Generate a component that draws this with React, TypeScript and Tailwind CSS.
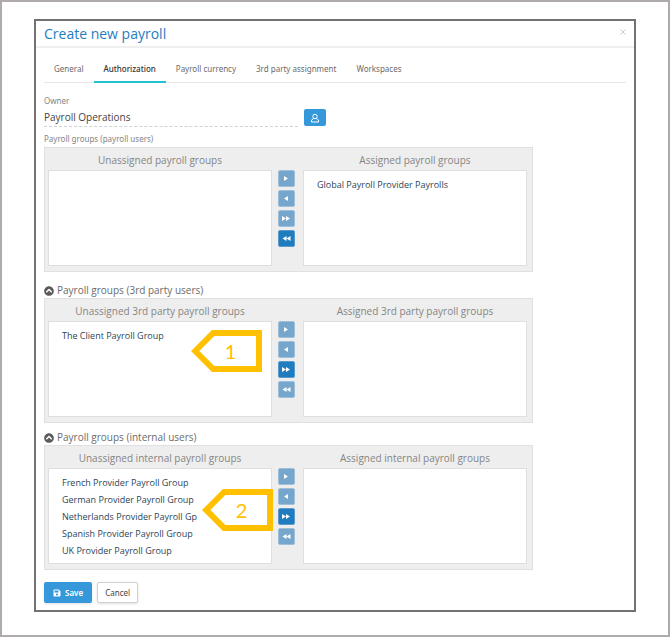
import type { ReactNode } from "react";
import { FaChevronCircleUp, FaSave } from "react-icons/fa";

const tabs = ["General", "Authorization", "Payroll currency", "3rd party assignment", "Workspaces"];

type Move = "right" | "left" | "allRight" | "allLeft";

const moves: { id: Move; label: string; path: string }[] = [
  { id: "right", label: "Assign selected", path: "M2 1v5L6 3.5z" },
  { id: "left", label: "Unassign selected", path: "M6 1v5L2 3.5z" },
  { id: "allRight", label: "Assign all", path: "M0 1v5L4 3.5zM4 1v5L8 3.5z" },
  { id: "allLeft", label: "Unassign all", path: "M4.5 1v5L0.5 3.5zM8.5 1v5L4.5 3.5z" },
];

function ListBox({ id, title, items }: { id: string; title: string; items: string[] }) {
  return (
    <div className="flex min-w-0 flex-1 flex-col">
      <label htmlFor={id} className="block pb-[2px] text-center text-[10px] leading-4 text-[#858585]">
        {title}
      </label>
      <select
        id={id}
        multiple
        className="h-[96px] w-full appearance-none overflow-hidden border border-[#dfdfdf] bg-white pt-[7px] pl-[13px] text-[9px] leading-[17px] text-[#2c4557] outline-none"
      >
        {items.map((item) => (
          <option key={item} className="min-h-[17px] p-0 leading-[17px]">
            {item}
          </option>
        ))}
      </select>
    </div>
  );
}

function PickList({
  id,
  kind,
  unassigned = [],
  assigned = [],
  active,
  children,
}: {
  id: string;
  kind: string;
  unassigned?: string[];
  assigned?: string[];
  active: Move;
  children?: ReactNode;
}) {
  return (
    <div className="relative flex w-full max-w-[489px] gap-[6px] border border-[#e0e0e0] bg-[#eeeeee] pt-1 pr-[5px] pb-[5px] pl-[3px]">
      <ListBox id={`${id}-unassigned`} title={`Unassigned ${kind}`} items={unassigned} />
      <div className="flex flex-col gap-[3px] pt-[18px] pr-[2px]">
        {moves.map((m) => (
          <button
            key={m.id}
            type="button"
            aria-label={m.label}
            disabled={m.id !== active}
            className={`flex size-[17px] items-center justify-center rounded-[2px] border ${
              m.id === active ? "border-[#5a9bcb] bg-[#1f7dbf]" : "border-[#9dbfd9] bg-[#76a6cb]"
            }`}
          >
            <svg viewBox="0 0 9 8" className="h-2 w-[9px] fill-white" aria-hidden="true">
              <path d={m.path} />
            </svg>
          </button>
        ))}
      </div>
      <ListBox id={`${id}-assigned`} title={`Assigned ${kind}`} items={assigned} />
      {children}
    </div>
  );
}

// numbered arrow pointing left
function Callout({ n, className }: { n: number; className: string }) {
  return (
    <div className={`pointer-events-none absolute h-[42px] w-[71px] ${className}`}>
      <svg viewBox="0 0 71 42" className="block size-full" aria-hidden="true">
        <path d="M4.2 21L22.2 3H68V39H22.2Z" fill="#fff" stroke="#ffc000" strokeWidth="6" />
      </svg>
      <span className="absolute inset-0 flex items-center justify-center pl-2 font-[Lato,sans-serif] text-[20px] text-[#ffc000]">
        {n}
      </span>
    </div>
  );
}

function SectionTitle({ children }: { children: string }) {
  return (
    <h2 className="flex items-center gap-[3px] text-[10px] leading-[15px] text-[#6b6b6b]">
      <FaChevronCircleUp className="size-[10px] text-[#5c5c5c]" />
      {children}
    </h2>
  );
}

export default function App() {
  return (
    <div className="min-h-screen border-2 border-[#afabab] bg-white px-8 pt-[17px] pb-[23px] font-['Open_Sans',sans-serif]">
      <div className="border-2 border-[#767171] bg-white">
        <header className="flex items-start justify-between border-b-2 border-[#efefef] pr-[7px] pl-2">
          <h1 className="text-[14px] leading-[25px] text-[#1f7dbf]">Create new payroll</h1>
          <button type="button" aria-label="Close" className="pt-[7px]">
            <svg viewBox="0 0 8 8" className="size-2 stroke-[#cccccc]" aria-hidden="true">
              <path d="M1.5 1.5l5 5M6.5 1.5l-5 5" />
            </svg>
          </button>
        </header>

        <div className="px-2 pb-[7px]">
          <nav className="flex border-b border-[#e6e6e6] pt-2 font-['Noto_Sans',sans-serif]">
            {tabs.map((tab) => (
              <a
                key={tab}
                href="#"
                className={`-mb-px border-b-2 px-[10px] text-[8px] leading-[25px] ${
                  tab === "Authorization"
                    ? "border-[#22c1d0] font-medium text-[#333]"
                    : "border-transparent text-[#6b6b6b]"
                }`}
              >
                {tab}
              </a>
            ))}
          </nav>

          <div className="flex items-end gap-[6px] pt-3">
            <div className="w-[254px]">
              <label
                htmlFor="owner"
                className="block font-['Noto_Sans',sans-serif] text-[8px] leading-3 text-[#858585]"
              >
                Owner
              </label>
              <input
                id="owner"
                readOnly
                defaultValue="Payroll Operations"
                className="block h-5 w-full border-b border-dashed border-[#ccd3db] text-[10px] text-[#444] outline-none"
              />
            </div>
            <button
              type="button"
              aria-label="Choose owner"
              className="mb-px flex h-[17px] w-[22px] items-center justify-center rounded-[2px] bg-[#3498db]"
            >
              <svg viewBox="0 0 10 10" className="size-[10px] fill-none stroke-white" aria-hidden="true">
                <circle cx="5" cy="3.5" r="2.2" />
                <path d="M3.7 5.5L1.5 7v2h7V7L6.3 5.5" />
              </svg>
            </button>
          </div>

          <p className="pt-[5px] pb-px font-['Noto_Sans',sans-serif] text-[8px] leading-[14px] text-[#858585]">
            Payroll groups (payroll users)
          </p>
          <PickList id="payroll" kind="payroll groups" assigned={["Global Payroll Provider Payrolls"]} active="allLeft" />

          <div className="pt-[11px]">
            <SectionTitle>Payroll groups (3rd party users)</SectionTitle>
            <PickList
              id="third"
              kind="3rd party payroll groups"
              unassigned={["The Client Payroll Group"]}
              active="allRight"
            >
              <Callout n={1} className="top-[31px] left-[146px]" />
            </PickList>
          </div>

          <div className="pt-[7px]">
            <SectionTitle>Payroll groups (internal users)</SectionTitle>
            <PickList
              id="internal"
              kind="internal payroll groups"
              unassigned={[
                "French Provider Payroll Group",
                "German Provider Payroll Group",
                "Netherlands Provider Payroll Gp",
                "Spanish Provider Payroll Group",
                "UK Provider Payroll Group",
              ]}
              active="allRight"
            >
              <Callout n={2} className="top-[43px] left-[157px]" />
            </PickList>
          </div>

          <div className="flex gap-[5px] pt-3 font-['Noto_Sans',sans-serif]">
            <button
              type="button"
              className="flex h-[21px] items-center gap-1 rounded-[2px] bg-[#3498db] px-[9px] text-[8px] font-semibold text-white shadow-sm"
            >
              <FaSave className="size-2" />
              Save
            </button>
            <button
              type="button"
              className="h-[21px] rounded-[2px] border border-[#d0d0d0] bg-white px-[7px] text-[8px] text-[#444] shadow-sm"
            >
              Cancel
            </button>
          </div>
        </div>
      </div>
    </div>
  );
}
